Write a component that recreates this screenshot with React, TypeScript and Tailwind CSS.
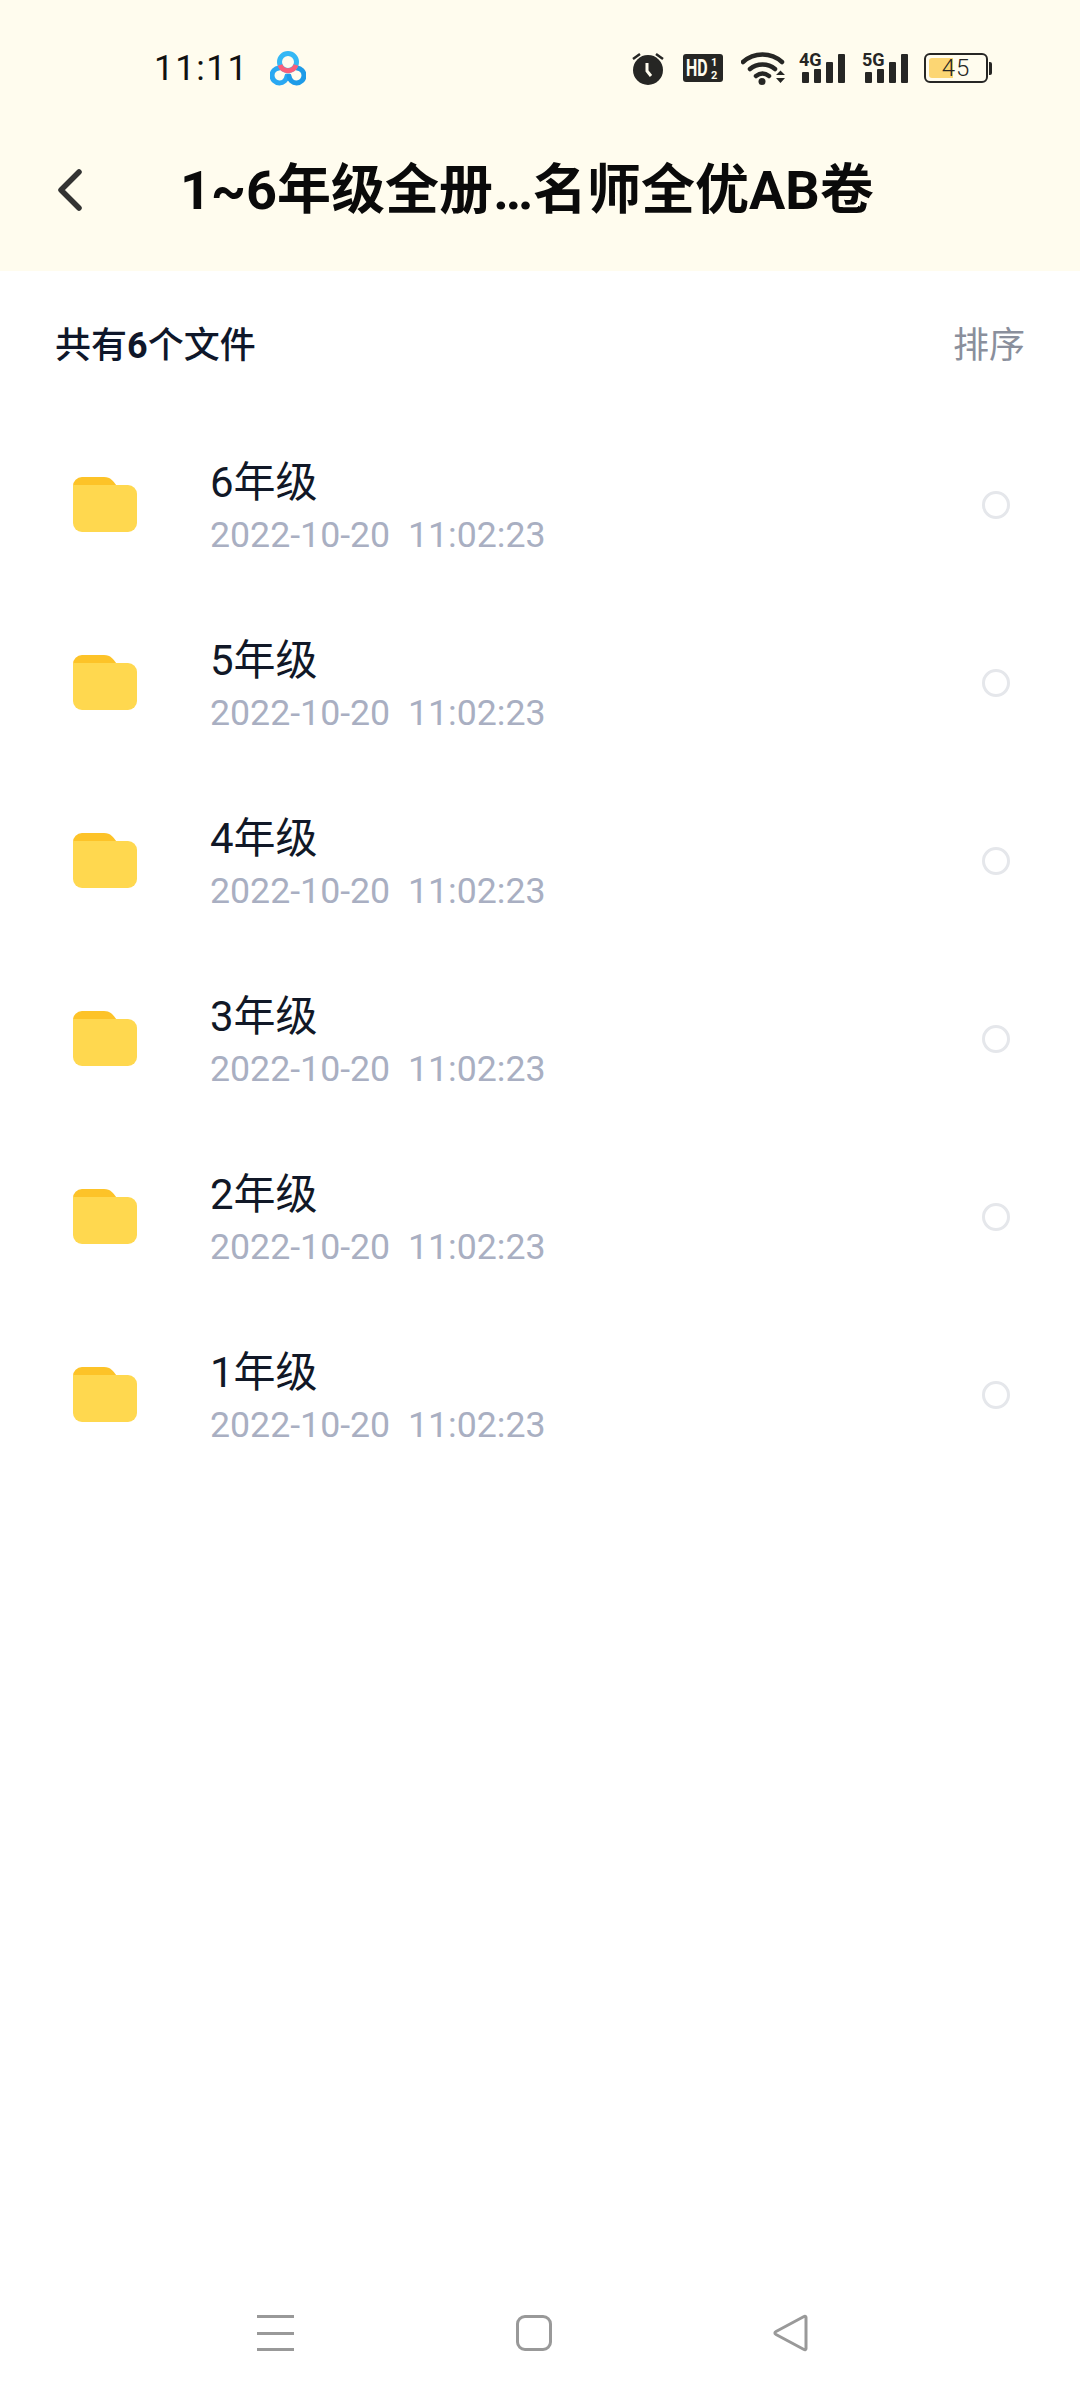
const FONT = "font-['Roboto','Noto_Sans_CJK_SC',sans-serif]";

const grades = ["6年级", "5年级", "4年级", "3年级", "2年级", "1年级"];

function AppLogo() {
  return (
    <svg width="36" height="36" viewBox="0 0 36 36" fill="none" className="ml-[21px]">
      <path d="M9 18a7.500 7.500 0 1 0 8 8" stroke="#2aa8f2" strokeWidth="5" strokeLinecap="round" />
      <path d="M27 18a7.500 7.500 0 1 1-8 8" stroke="#1e9be8" strokeWidth="5" strokeLinecap="round" />
      <circle cx="18" cy="12" r="8.500" stroke="#35b8f5" strokeWidth="5" />
      <path d="M10 15a8.500 8.500 0 0 0 16 0" stroke="#fb5f7a" strokeWidth="5" />
    </svg>
  );
}

function Alarm() {
  return (
    <svg width="32" height="34" viewBox="0 0 32 34" fill="none">
      <circle cx="16" cy="19" r="15" fill="#262624" />
      <path d="M1 8l7-5M31 8l-7-5" stroke="#262624" strokeWidth="2.500" />
      <path d="M15 12v8l4 5" stroke="#fffcee" strokeWidth="3" />
    </svg>
  );
}

function HdBadge() {
  return (
    <svg width="40" height="28" viewBox="0 0 40 28">
      <rect width="40" height="28" rx="3" fill="#262624" />
      <text transform="translate(3 22) scale(1 1.500)" fontFamily="Roboto" fontWeight="700" fontSize="16" fill="#fffcee">HD</text>
      <text x="28" y="11.500" fontFamily="Roboto" fontWeight="700" fontSize="11" fill="#fffcee">1</text>
      <text x="28" y="25" fontFamily="Roboto" fontWeight="700" fontSize="11" fill="#fffcee">2</text>
    </svg>
  );
}

function Wifi() {
  return (
    <svg width="46" height="34" viewBox="0 0 46 34" fill="none">
      <path d="M2 11c11-10 28-10 39 0" stroke="#262624" strokeWidth="4.500" strokeLinecap="round" />
      <path d="M9 18c7-6 18-6 25 0" stroke="#262624" strokeWidth="4.500" strokeLinecap="round" />
      <path d="M15 25c4-3 9-3 13 0" stroke="#262624" strokeWidth="4.500" strokeLinecap="round" />
      <circle cx="21" cy="30.500" r="3.500" fill="#262624" />
      <path d="M35 24l4.500-4.500 4.500 4.500zM35 27h9l-4.500 5z" fill="#262624" />
    </svg>
  );
}

function Signal({ label }: { label: string }) {
  return (
    <svg width="46" height="38" viewBox="0 0 46 38">
      <text x="0" y="17" fontFamily="Roboto" fontWeight="700" fontSize="18" fill="#262624">{label}</text>
      <rect x="3" y="23" width="7" height="11" rx="1" fill="#262624" />
      <rect x="15" y="20" width="7" height="14" rx="1" fill="#262624" />
      <rect x="27" y="13" width="7" height="21" rx="1" fill="#262624" />
      <rect x="39" y="5" width="7" height="29" rx="1" fill="#262624" />
    </svg>
  );
}

function Battery() {
  return (
    <div className="flex items-center">
      <div className="relative w-[64px] h-[30px] rounded-[6px] border-[2px] border-[#262624] overflow-hidden flex items-center justify-center">
        <div className="absolute left-[3px] top-[3px] bottom-[3px] w-[24px] rounded-l-[3px] bg-[#fcd673]" />
        <span className="relative text-[24px] leading-none tracking-[1px] text-[#262624] font-['Roboto',sans-serif] font-light">45</span>
      </div>
      <div className="ml-[1px] w-[3px] h-[13px] rounded-r-[2px] bg-[#262624]" />
    </div>
  );
}

function StatusBar() {
  return (
    <div className="h-[136px] pt-[50px] pl-[154px] pr-[88px] flex items-start justify-between">
      <div className="flex items-center h-[36px]">
        <span className="text-[35px] leading-none tracking-[1.5px] text-[#111] font-['Roboto',sans-serif]">11:11</span>
        <AppLogo />
      </div>
      <div className="flex items-center h-[36px]">
        <div className="mr-[19px]"><Alarm /></div>
        <div className="mr-[18px]"><HdBadge /></div>
        <div className="mr-[12px]"><Wifi /></div>
        <div className="mr-[17px]"><Signal label="4G" /></div>
        <div className="mr-[16px]"><Signal label="5G" /></div>
        <Battery />
      </div>
    </div>
  );
}

function FolderIcon() {
  return (
    <svg width="64" height="55" viewBox="0 0 64 55">
      <path d="M0 9a9 9 0 0 1 9-9h22c7 0 9 4 13 9z" fill="#fdc328" />
      <path d="M0 8h55a9 9 0 0 1 9 9v29a9 9 0 0 1-9 9H9a9 9 0 0 1-9-9z" fill="#ffd84f" />
    </svg>
  );
}

function FileRow({ name }: { name: string }) {
  return (
    <div className="h-[178px] flex items-center">
      <div className="ml-[73px] mb-[2px]"><FolderIcon /></div>
      <div className="ml-[73px] flex-1 flex flex-col gap-[6px] mt-[5px]">
        <span className="text-[42px] leading-[48px] text-[#111827]">{name}</span>
        <span className="text-[35.700px] leading-[44px] text-[#a9afc2] whitespace-pre">2022-10-20  11:02:23</span>
      </div>
      <div className="mr-[70px] w-[28px] h-[28px] rounded-full border-[3px] border-[#e5e7eb]" />
    </div>
  );
}

function NavBar() {
  return (
    <div className="mt-auto mb-[48px] pl-[257px] flex items-center">
      <div className="w-[37px] h-[36px] flex flex-col justify-between">
        <div className="h-[3px] bg-[#999]" />
        <div className="h-[3px] bg-[#999]" />
        <div className="h-[3px] bg-[#999]" />
      </div>
      <div className="ml-[222px] w-[36px] h-[36px] rounded-[9px] border-[3px] border-[#999]" />
      <svg width="36" height="38" viewBox="0 0 36 38" fill="none" className="ml-[221px]">
        <path d="M33 3.500c0-1-1-1.500-2-1L3 17.500c-1.500.8-1.500 2.200 0 3l28 15c1 .5 2 0 2-1z" stroke="#999" strokeWidth="3" strokeLinejoin="round" />
      </svg>
    </div>
  );
}

export default function App() {
  return (
    <div className={`w-[1080px] h-[2400px] bg-white flex flex-col overflow-hidden ${FONT}`}>
      <div className="h-[271px] bg-[#fffcee]">
        <StatusBar />
        <div className="h-[108px] flex items-center">
          <svg width="26" height="42" viewBox="0 0 26 42" fill="none" className="ml-[57px]">
            <path d="M22 3L4 21l18 18" stroke="#333" strokeWidth="5.500" strokeLinecap="round" strokeLinejoin="round" />
          </svg>
          <h1 className="ml-[97px] mt-[2px] text-[54px] leading-none font-bold text-[#0a0a0a] whitespace-nowrap">1~6年级全册…名师全优AB卷</h1>
        </div>
      </div>
      <div className="h-[145px] pl-[55px] pr-[55px] pt-[4px] flex items-center justify-between">
        <span className="text-[36px] font-medium text-[#0f172a]">共有<span className="font-bold">6</span>个文件</span>
        <span className="text-[36px] text-[#8a8f9c]">排序</span>
      </div>
      <div className="flex flex-col">
        {grades.map((g) => (
          <FileRow key={g} name={g} />
        ))}
      </div>
      <NavBar />
    </div>
  );
}
